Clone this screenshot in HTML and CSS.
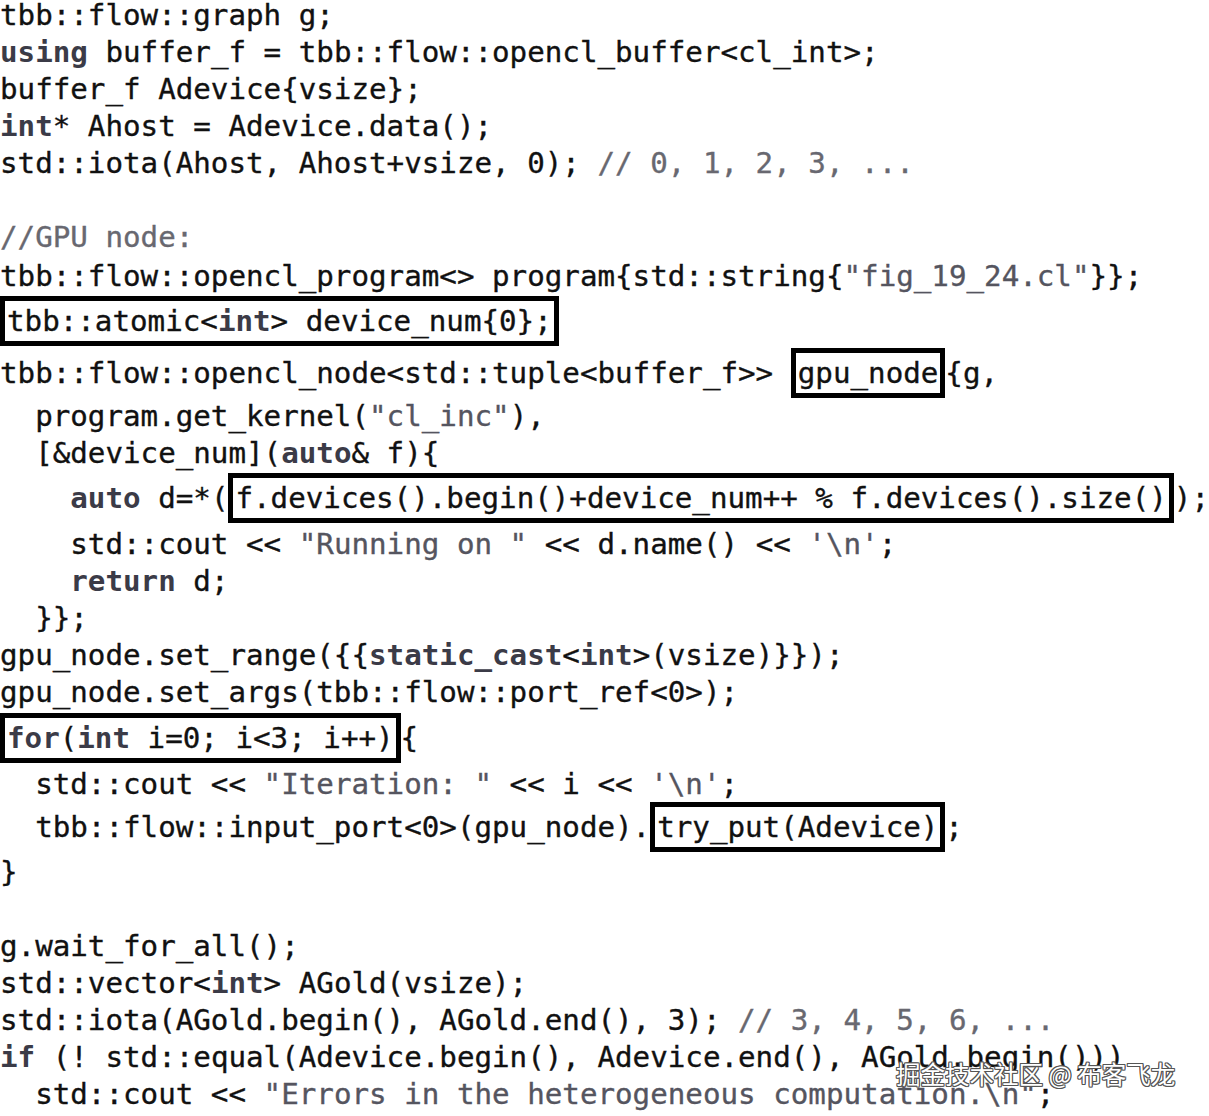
FILE: index.html
```html
<!DOCTYPE html>
<html lang="en">
<head>
<meta charset="utf-8">
<title>TBB flow graph OpenCL node listing</title>
<link rel="stylesheet" href="styles.css">
</head>
<body>
<main class="page">
  <div class="code">
    <div class="ln first">tbb::flow::graph g;</div>
    <div class="ln"><span class="kw">using</span> buffer_f = tbb::flow::opencl_buffer&lt;cl_int&gt;;</div>
    <div class="ln">buffer_f Adevice{vsize};</div>
    <div class="ln"><span class="kw">int</span>* Ahost = Adevice.data();</div>
    <div class="ln">std::iota(Ahost, Ahost+vsize, 0); <span class="cm">// 0, 1, 2, 3, ...</span></div>
    <div class="ln"></div>
    <div class="ln"><span class="cm">//GPU node:</span></div>
    <div class="ln sp2">tbb::flow::opencl_program&lt;&gt; program{std::string{<span class="st">"fig_19_24.cl"</span>}};</div>
    <div class="ln sp8"><span class="box">tbb::atomic&lt;<span class="kw">int</span>&gt; device_num{0};</span></div>
    <div class="ln sp15">tbb::flow::opencl_node&lt;std::tuple&lt;buffer_f&gt;&gt; <span class="box">gpu_node</span>{g,</div>
    <div class="ln sp6">  program.get_kernel(<span class="st">"cl_inc"</span>),</div>
    <div class="ln">  [&amp;device_num](<span class="kw">auto</span>&amp; f){</div>
    <div class="ln sp8">    <span class="kw">auto</span> d=*(<span class="box">f.devices().begin()+device_num++ % f.devices().size()</span>);</div>
    <div class="ln sp9">    std::cout &lt;&lt; <span class="st">"Running on "</span> &lt;&lt; d.name() &lt;&lt; <span class="st">'\n'</span>;</div>
    <div class="ln">    <span class="kw">return</span> d;</div>
    <div class="ln">  }};</div>
    <div class="ln">gpu_node.set_range({{<span class="kw">static_cast</span>&lt;<span class="kw">int</span>&gt;(vsize)}});</div>
    <div class="ln">gpu_node.set_args(tbb::flow::port_ref&lt;0&gt;);</div>
    <div class="ln sp9"><span class="box"><span class="kw">for</span>(<span class="kw">int</span> i=0; i&lt;3; i++)</span>{</div>
    <div class="ln sp9">  std::cout &lt;&lt; <span class="st">"Iteration: "</span> &lt;&lt; i &lt;&lt; <span class="st">'\n'</span>;</div>
    <div class="ln sp6">  tbb::flow::input_port&lt;0&gt;(gpu_node).<span class="box">try_put(Adevice)</span>;</div>
    <div class="ln sp8">}</div>
    <div class="ln"></div>
    <div class="ln">g.wait_for_all();</div>
    <div class="ln">std::vector&lt;<span class="kw">int</span>&gt; AGold(vsize);</div>
    <div class="ln">std::iota(AGold.begin(), AGold.end(), 3); <span class="cm">// 3, 4, 5, 6, ...</span></div>
    <div class="ln"><span class="kw">if</span> (! std::equal(Adevice.begin(), Adevice.end(), AGold.begin()))</div>
    <div class="ln">  std::cout &lt;&lt; <span class="st">"Errors in the heterogeneous computation.\n"</span>;</div>
  </div>
  <div class="watermark">掘金技术社区 @ 布客飞龙</div>
</main>
</body>
</html>
```

FILE: styles.css
```css
html, body {
  margin: 0;
  padding: 0;
  background: #ffffff;
  overflow: hidden;
}

.page {
  position: relative;
  width: 1209px;
  height: 1116px;
  overflow: hidden;
}

.code {
  font-family: "DejaVu Sans Mono", "Liberation Mono", monospace;
  font-size: 29.2px;
  color: #111111;
  -webkit-text-stroke: 0.35px currentColor;
}

.ln {
  height: 37px;
  line-height: 37px;
  white-space: pre;
}

.ln.first {
  height: 33.5px;
  line-height: 30px;
}

.sp2 { margin-top: 2px; }
.sp6 { margin-top: 6px; }
.sp8 { margin-top: 8px; }
.sp9 { margin-top: 9px; }
.sp15 { margin-top: 15px; }

.kw {
  color: #3b3b47;
  font-weight: bold;
  -webkit-text-stroke: 0;
}

.st {
  color: #55555f;
}

.cm {
  color: #686870;
}

.box {
  border: 5px solid #000000;
  padding: 3px 2px;
}

.watermark {
  position: absolute;
  left: 896px;
  top: 1055px;
  font-family: "Noto Sans CJK SC", "Noto Sans", sans-serif;
  font-size: 24.5px;
  line-height: 38px;
  color: #ffffff;
  white-space: nowrap;
  text-shadow:
    1px 1px 0 #555,
    -1px -1px 0 #555,
    1px -1px 0 #555,
    -1px 1px 0 #555,
    0 1px 0 #555,
    0 -1px 0 #555,
    1px 0 0 #555,
    -1px 0 0 #555;
}
```
